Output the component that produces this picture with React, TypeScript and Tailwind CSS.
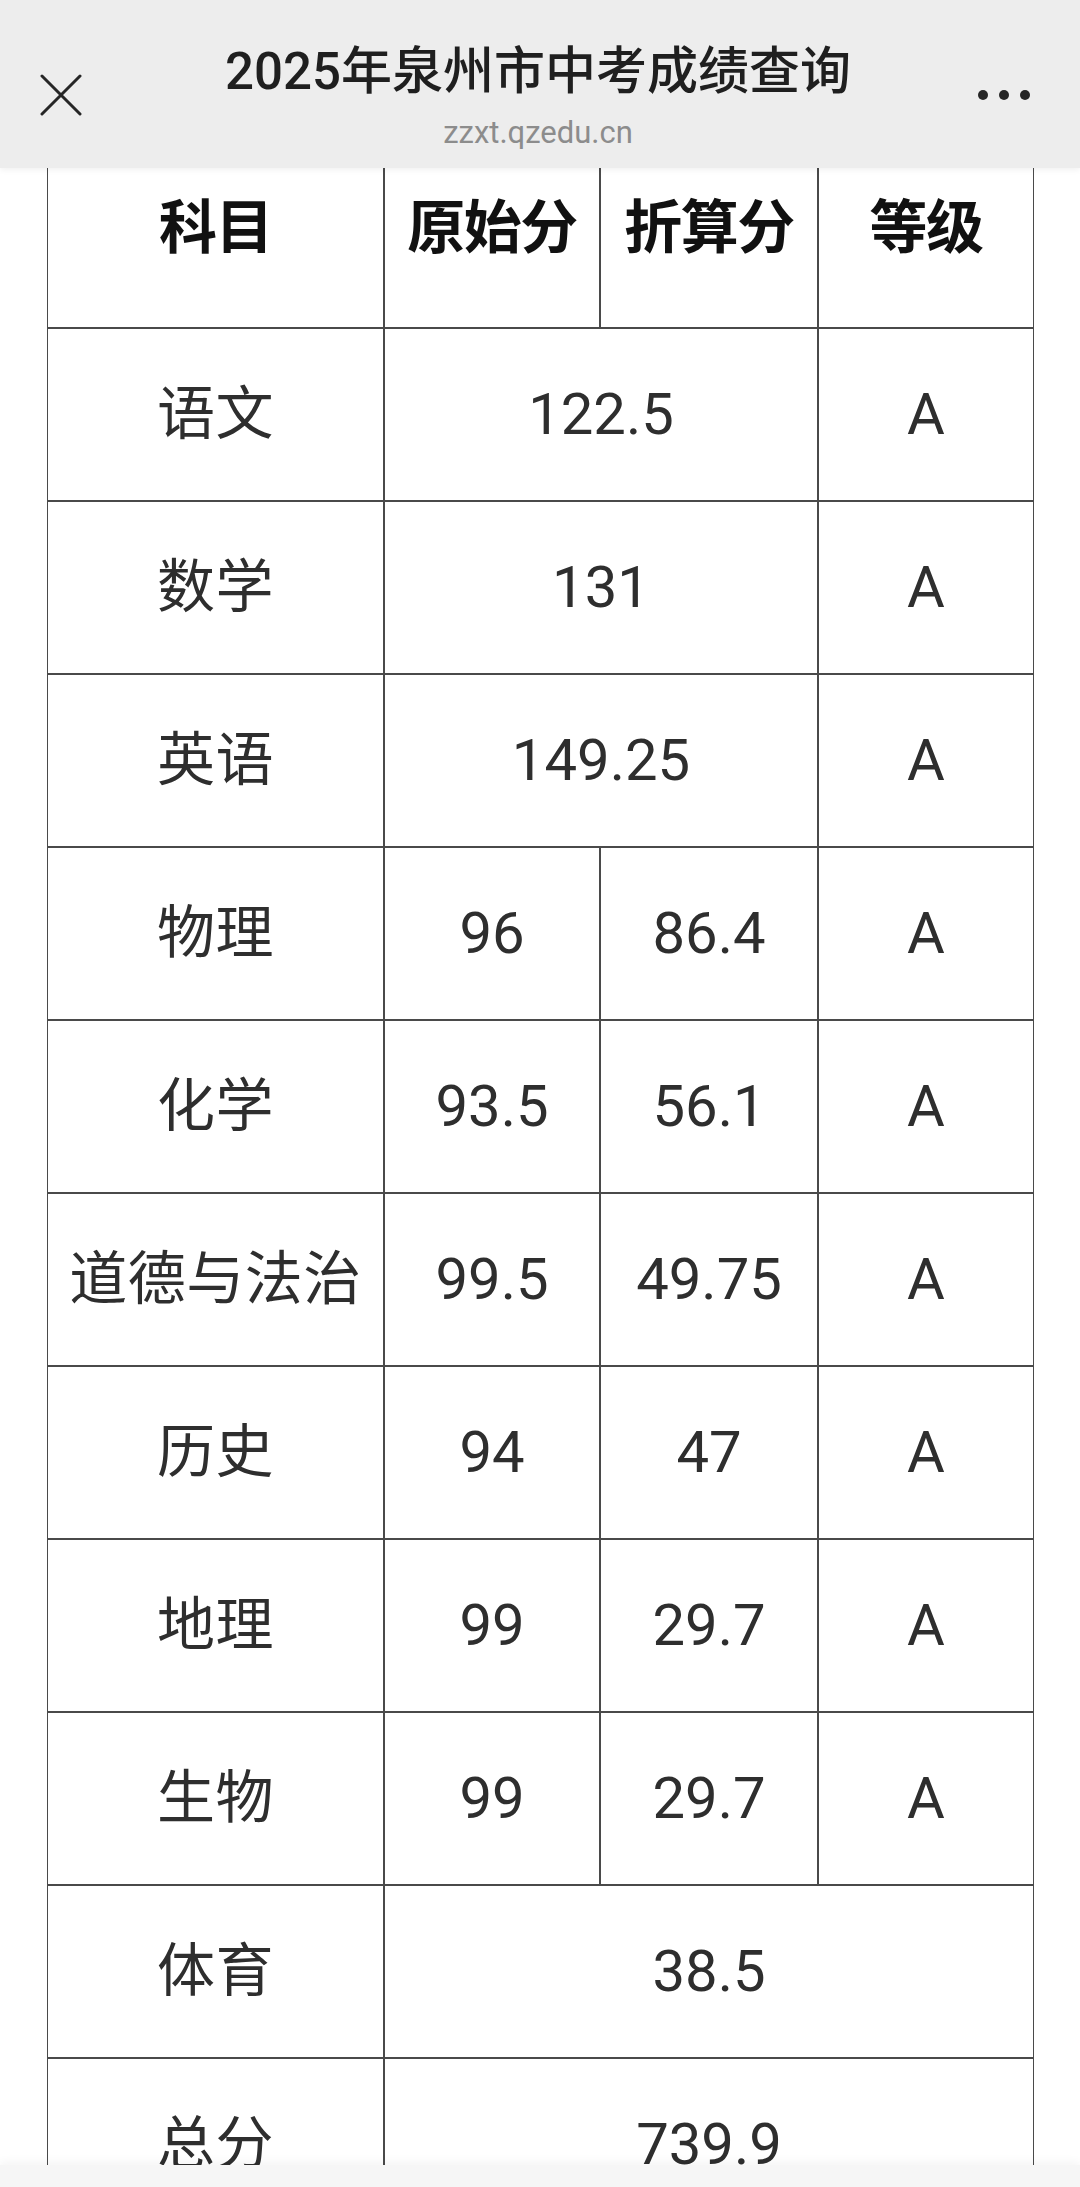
import React from 'react';

type Row = {
    subject: string;
    raw?: string;
    converted?: string;
    merged?: string;
    grade?: string;
    wide?: boolean;
};

const rows: Row[] = [
    { subject: '语文', merged: '122.5', grade: 'A' },
    { subject: '数学', merged: '131', grade: 'A' },
    { subject: '英语', merged: '149.25', grade: 'A' },
    { subject: '物理', raw: '96', converted: '86.4', grade: 'A' },
    { subject: '化学', raw: '93.5', converted: '56.1', grade: 'A' },
    { subject: '道德与法治', raw: '99.5', converted: '49.75', grade: 'A' },
    { subject: '历史', raw: '94', converted: '47', grade: 'A' },
    { subject: '地理', raw: '99', converted: '29.7', grade: 'A' },
    { subject: '生物', raw: '99', converted: '29.7', grade: 'A' },
    { subject: '体育', merged: '38.5', wide: true },
    { subject: '总分', merged: '739.9', wide: true },
];

const cell = 'border border-[#4a4a4a] text-center align-middle p-0';

export default function App() {
    return (
        <div className="w-[1080px] h-[2187px] overflow-hidden bg-white relative font-['Roboto','Noto_Sans_CJK_SC',sans-serif]">
            {/* top bar of the in-app browser */}
            <header className="h-[168px] bg-[#ededed] flex items-center px-[40px] relative z-10 shadow-[0_2px_6px_rgba(0,0,0,0.06)]">
                <svg width="42" height="42" viewBox="0 0 42 42" className="shrink-0 mt-[22px]">
                    <path d="M2 2 L40 40 M40 2 L2 40" stroke="#262626" strokeWidth="3" strokeLinecap="round" />
                </svg>
                <div className="flex-1 flex flex-col items-center pt-[28px] ml-[16px]">
                    <h1 className="text-[51px] leading-[58px] font-medium text-[#1f1f1f]">2025年泉州市中考成绩查询</h1>
                    <div className="text-[31px] leading-[40px] text-[#8c8c8c] mt-[12px]">zzxt.qzedu.cn</div>
                </div>
                <div className="flex gap-[11px] mt-[22px] shrink-0 mr-[10px]">
                    <span className="w-[10px] h-[10px] rounded-full bg-[#262626]" />
                    <span className="w-[10px] h-[10px] rounded-full bg-[#262626]" />
                    <span className="w-[10px] h-[10px] rounded-full bg-[#262626]" />
                </div>
            </header>

            <table className="ml-[47px] w-[987px] table-fixed border-separate border-spacing-0 text-[#2e2e2e]">
                <colgroup>
                    <col className="w-[337px]" />
                    <col className="w-[216px]" />
                    <col className="w-[218px]" />
                    <col className="w-[216px]" />
                </colgroup>
                <thead>
                    <tr className="h-[160px]">
                        {['科目', '原始分', '折算分', '等级'].map((h) => (
                            <th key={h} className={`${cell} border-t-0 align-top pt-[32px] text-[58px] leading-[56px] font-bold text-[#111] tracking-[-1.5px]`}>
                                {h}
                            </th>
                        ))}
                    </tr>
                </thead>
                <tbody>
                    {rows.map((r) => (
                        <tr key={r.subject} className="h-[173px]">
                            <td className={`${cell} text-[58px] whitespace-nowrap tracking-[0.5px]`}>{r.subject}</td>
                            {r.wide ? (
                                <td colSpan={3} className={`${cell} text-[58px]`}>{r.merged}</td>
                            ) : r.merged ? (
                                <>
                                    <td colSpan={2} className={`${cell} text-[58px]`}>{r.merged}</td>
                                    <td className={`${cell} text-[58px]`}>{r.grade}</td>
                                </>
                            ) : (
                                <>
                                    <td className={`${cell} text-[58px]`}>{r.raw}</td>
                                    <td className={`${cell} text-[58px]`}>{r.converted}</td>
                                    <td className={`${cell} text-[58px]`}>{r.grade}</td>
                                </>
                            )}
                        </tr>
                    ))}
                </tbody>
            </table>

            {/* bottom system bar */}
            <div className="absolute left-0 right-0 bottom-0 h-[22px] bg-[#f6f6f6] shadow-[0_-4px_8px_rgba(0,0,0,0.04)]" />
        </div>
    );
}
